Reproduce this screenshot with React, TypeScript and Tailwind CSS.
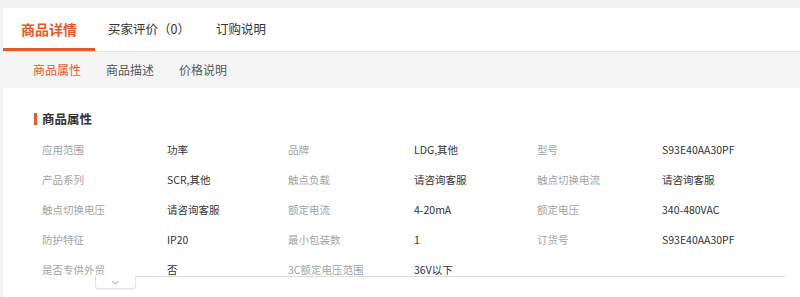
import { Fragment } from 'react';

const FONT = { fontFamily: '"Noto Sans CJK SC", "Liberation Sans", sans-serif' };

const ROWS: [string, string][][] = [
  [['应用范围', '功率'], ['品牌', 'LDG,其他'], ['型号', 'S93E40AA30PF']],
  [['产品系列', 'SCR,其他'], ['触点负载', '请咨询客服'], ['触点切换电流', '请咨询客服']],
  [['触点切换电压', '请咨询客服'], ['额定电流', '4-20mA'], ['额定电压', '340-480VAC']],
  [['防护特征', 'IP20'], ['最小包装数', '1'], ['订货号', 'S93E40AA30PF']],
  [['是否专供外贸', '否'], ['3C额定电压范围', '36V以下']],
];

export default function App() {
  return (
    <div className="w-[800px] h-[297px] overflow-hidden bg-[#f2f2f2] pt-2" style={FONT}>
      {/* main tabs */}
      <div className="ml-[3px] h-[44px] bg-white border-b border-[#e3e3e3] flex items-stretch">
        <div className="px-[18px] flex items-center text-[14px] font-bold text-[#e55a2b] border-b-[3px] border-[#e55a2b] pt-[3px]">
          商品详情
        </div>
        <div className="px-[13px] flex items-center text-[12.5px] text-[#333]">买家评价（0）</div>
        <div className="px-[13px] flex items-center text-[12.5px] text-[#333]">订购说明</div>
      </div>

      {/* sub tabs */}
      <div className="h-[36px] bg-[#f5f5f5] flex items-center gap-[25px] pl-[33px] text-[12px] text-[#555]">
        <span className="text-[#e55a2b]">商品属性</span>
        <span>商品描述</span>
        <span>价格说明</span>
      </div>

      {/* content */}
      <div className="ml-[3px] bg-white h-[210px] pt-[23px]">
        <div className="flex items-center gap-[5px] pl-[31px] h-[16px]">
          <span className="w-[3px] h-[12px] bg-[#e55a2b]" />
          <span className="text-[12.5px] font-bold text-[#333]">商品属性</span>
        </div>
        <div className="pl-[39px] mt-[8px] h-[141px] overflow-hidden">
          {ROWS.map((row, i) => (
            <div key={i} className="grid grid-cols-[125px_121px_126px_123px_125px_1fr] h-[30px] items-center text-[10.5px]">
              {row.map(([k, v]) => (
                <Fragment key={k}>
                  <span className="text-[#a3a3a3]">{k}</span>
                  <span className="text-[#333]">{v}</span>
                </Fragment>
              ))}
            </div>
          ))}
        </div>
        <div className="flex pr-[15px]">
          <div className="ml-[92px] w-[41px] h-[13px] bg-white border border-t-0 border-[#e6e6e6] rounded-b-[3px] shadow-[0_1px_2px_rgba(0,0,0,0.06)] flex items-center justify-center">
            <svg width="7" height="5" viewBox="0 0 7 5" fill="none" stroke="#9a9a9a" strokeWidth="1">
              <path d="M0.5 1L3.5 4L6.5 1" />
            </svg>
          </div>
          <div className="flex-1 border-t border-[#dcdcdc]" />
        </div>
      </div>
    </div>
  );
}
